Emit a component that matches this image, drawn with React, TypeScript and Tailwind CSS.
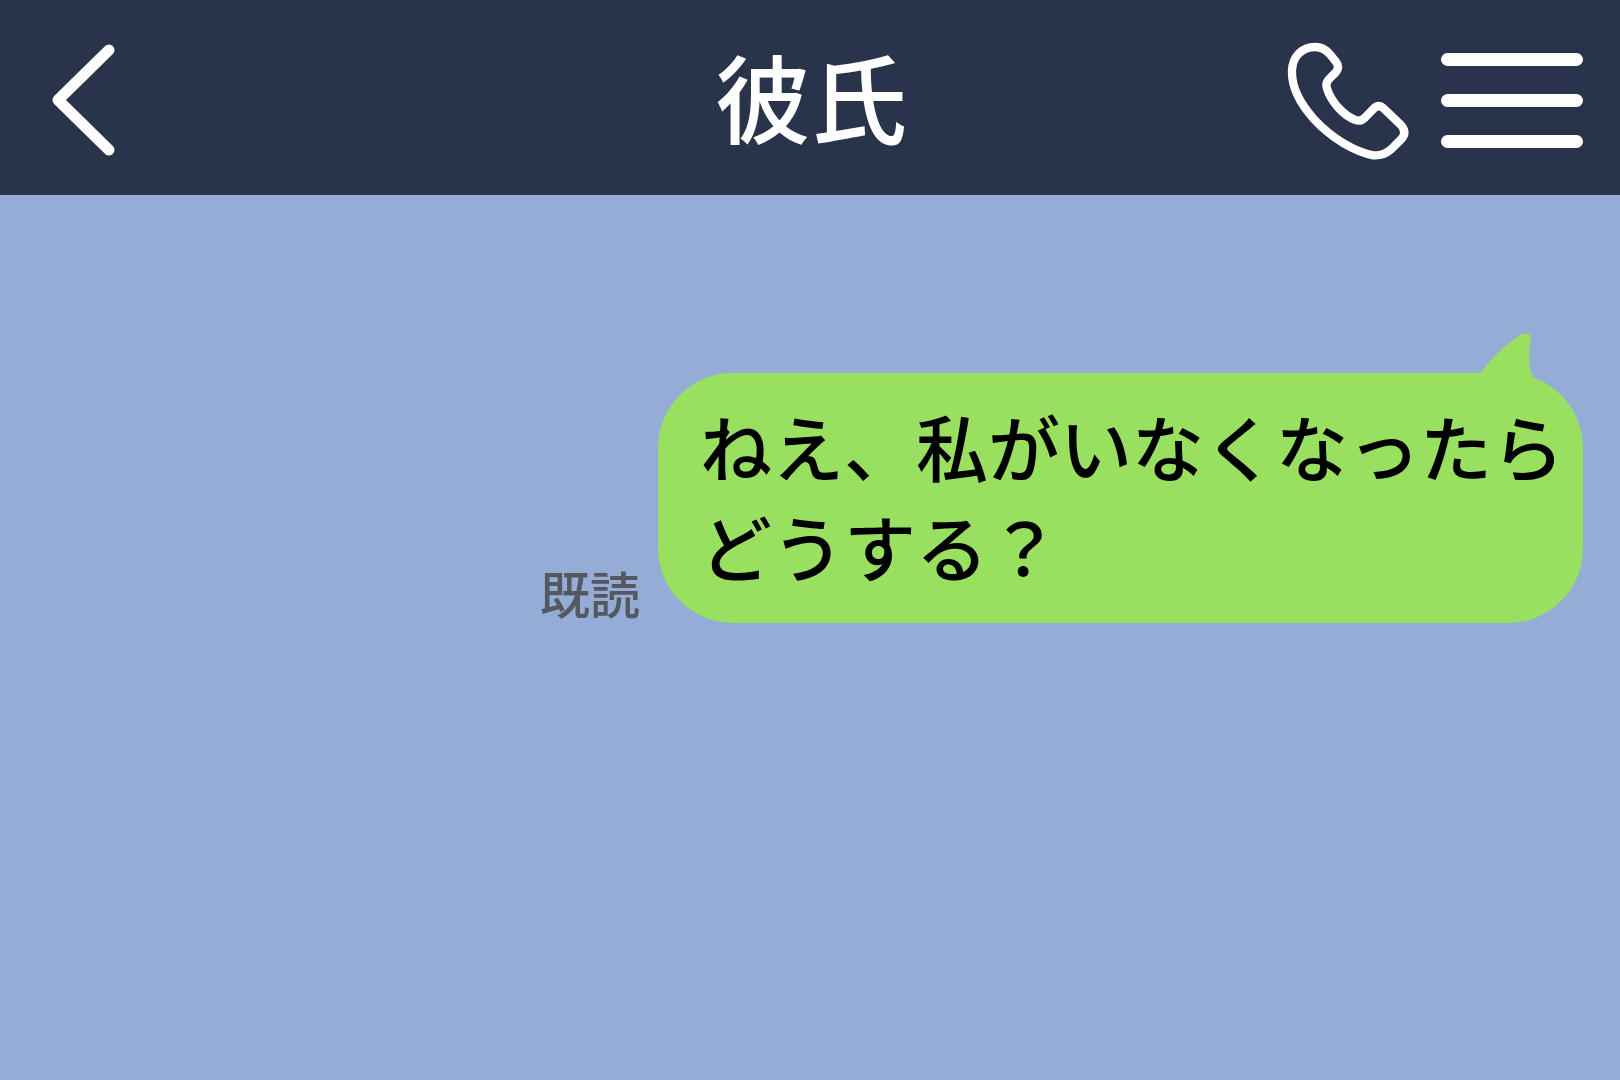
import React from 'react';

const CJK = "font-['Noto_Sans_CJK_JP','Noto_Sans_CJK_SC',sans-serif]";

const BackIcon: React.FC = () => (
  <svg width="70" height="116" viewBox="0 0 70 116" fill="none" className="block">
    <path d="M58 7 L7 57 L58 107" stroke="#fff" strokeWidth="11" strokeLinecap="round" strokeLinejoin="round" />
  </svg>
);

const PhoneIcon: React.FC = () => (
  <svg width="127" height="123" viewBox="80 60 380 370" fill="none" className="block">
    <path
      d="M170 84 C190 84 205 95 215 107 L232 128 Q245 145 232 160 L212 180 Q200 192 205 208 C218 250 255 290 290 303 Q305 310 318 298 L345 270 Q360 255 375 268 L427 318 Q447 340 430 360 L398 392 Q375 412 345 410 C290 400 220 360 165 300 C125 255 98 205 100 155 C102 112 130 84 170 84 Z"
      stroke="#fff"
      strokeWidth="25"
      strokeLinejoin="round"
    />
  </svg>
);

const BubbleTail: React.FC = () => (
  <svg width="60" height="50" viewBox="0 0 60 50" className="absolute right-[48px] top-[-41px]">
    <path d="M5 41 C15 29 28 14 44 4 C50 0 56 1 56 7 C53 20 53 34 58 45 L58 50 L5 50 Z" fill="#99e060" />
  </svg>
);

export default function App() {
  return (
    <div className={`flex min-h-screen w-full flex-col bg-[#95add6] ${CJK}`}>
      <header className="grid h-[195px] grid-cols-[1fr_auto_1fr] items-center bg-[#29334a] pl-[51px] pr-[37px] pt-[6px]">
        <BackIcon />
        <h1 className="pb-[12px] pr-[12px] text-[96px] font-medium leading-none text-white">彼氏</h1>
        <div className="flex items-center justify-end gap-[29px]">
          <PhoneIcon />
          <div className="flex w-[142px] flex-col gap-[28px]">
            <span className="h-[13px] rounded-full bg-white" />
            <span className="h-[13px] rounded-full bg-white" />
            <span className="h-[13px] rounded-full bg-white" />
          </div>
        </div>
      </header>

      <main className="flex items-end justify-end gap-[18px] pr-[37px] pt-[178px]">
        <span className="pb-[6px] text-[50px] font-medium leading-none text-[#55585f]">既読</span>
        <div className="relative h-[250px] w-[925px] rounded-[75px] bg-[#99e060] pl-[42px] pt-[22px]">
          <BubbleTail />
          <p className="whitespace-nowrap text-[72px] font-medium leading-[100px] text-black">
            ねえ、私がいなくなったら
            <br />
            どうする？
          </p>
        </div>
      </main>
    </div>
  );
}
